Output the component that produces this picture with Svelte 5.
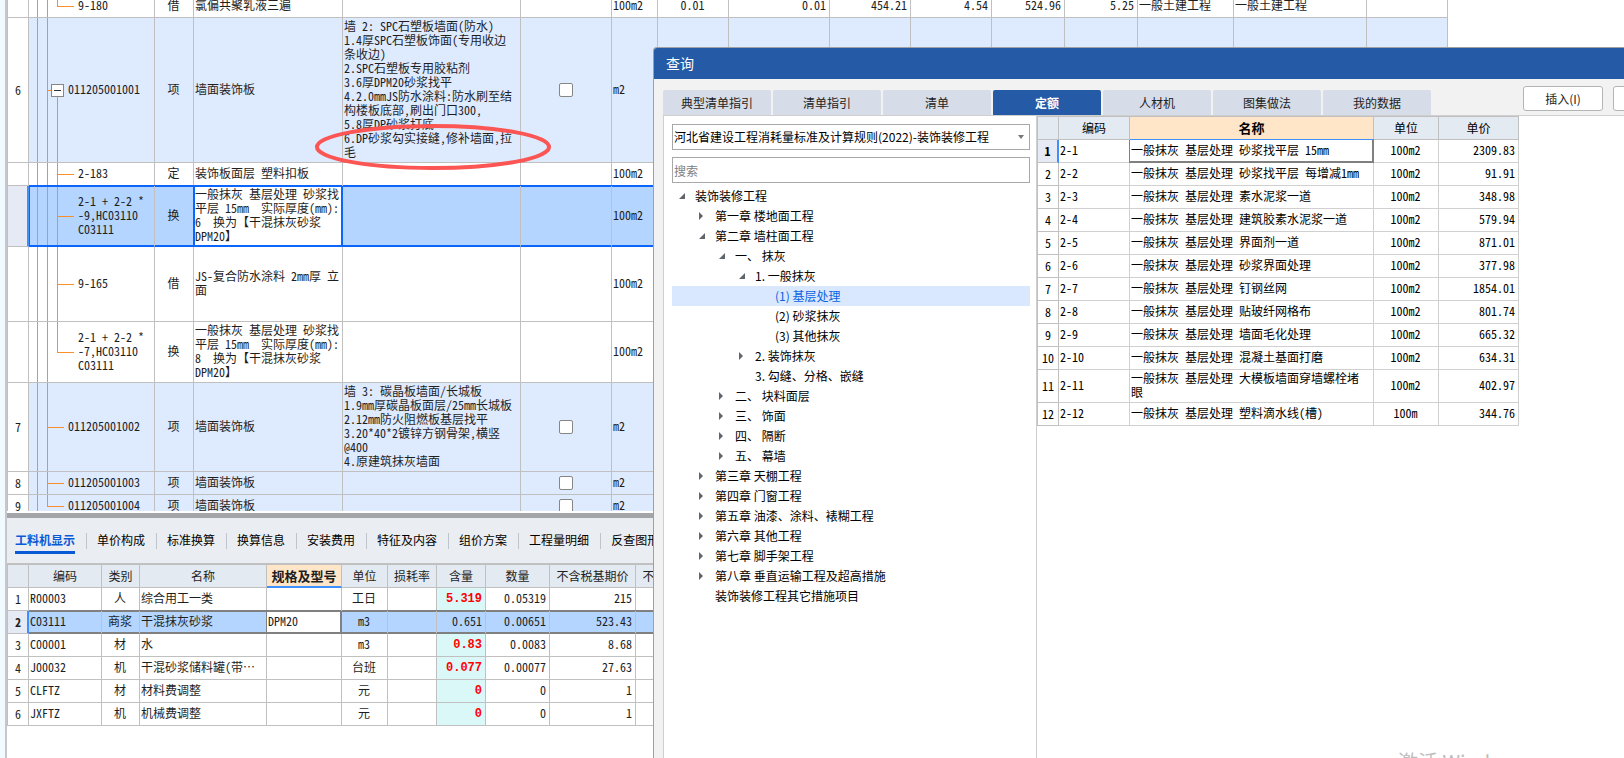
<script lang="ts">
  type BillRow = {
    no?: string
    code: string
    kind: string
    name: string
    feature?: string
    check?: boolean
    unit: string
    height: number
    item?: boolean
    open?: boolean
    last?: boolean
    selected?: boolean
    nums?: string[]
  }

  const billCols = [21, 126, 39, 149, 178, 91, 46, 71, 101, 81, 81, 73, 73, 96, 133, 81]
  const noNums = Array(9).fill('')

  const billRows: BillRow[] = [
    {
      code: '9-180', kind: '借', name: '氯偏共聚乳液三遍', unit: '100m2', height: 23, last: true,
      nums: ['0.01', '0.01', '454.21', '4.54', '524.96', '5.25', '一般土建工程', '一般土建工程', ''],
    },
    {
      no: '6', code: '011205001001', kind: '项', name: '墙面装饰板', unit: 'm2', height: 145,
      item: true, open: true, check: true,
      feature:
        '墙 2: SPC石塑板墙面(防水)\n1.4厚SPC石塑板饰面(专用收边\n条收边)\n2.SPC石塑板专用胶粘剂\n3.6厚DPM20砂浆找平\n4.2.0mmJS防水涂料:防水刷至结\n构楼板底部,刷出门口300,\n5.8厚DP砂浆打底\n6.DP砂浆勾实接缝,修补墙面,拉\n毛',
    },
    { code: '2-183', kind: '定', name: '装饰板面层 塑料扣板', unit: '100m2', height: 23 },
    {
      code: '2-1 + 2-2 *\n-9,HC03110\nC03111', kind: '换', unit: '100m2', height: 61, selected: true,
      name: '一般抹灰 基层处理 砂浆找\n平层 15mm  实际厚度(mm):\n6  换为【干混抹灰砂浆\nDPM20】',
    },
    { code: '9-165', kind: '借', name: 'JS-复合防水涂料 2mm厚 立\n面', unit: '100m2', height: 75 },
    {
      code: '2-1 + 2-2 *\n-7,HC03110\nC03111', kind: '换', unit: '100m2', height: 61, last: true,
      name: '一般抹灰 基层处理 砂浆找\n平层 15mm  实际厚度(mm):\n8  换为【干混抹灰砂浆\nDPM20】',
    },
    {
      no: '7', code: '011205001002', kind: '项', name: '墙面装饰板', unit: 'm2', height: 89,
      item: true, check: true,
      feature:
        '墙 3: 碳晶板墙面/长城板\n1.9mm厚碳晶板面层/25mm长城板\n2.12mm防火阻燃板基层找平\n3.20*40*2镀锌方钢骨架,横竖\n@400\n4.原建筑抹灰墙面',
    },
    { no: '8', code: '011205001003', kind: '项', name: '墙面装饰板', unit: 'm2', height: 23, item: true, check: true },
    { no: '9', code: '011205001004', kind: '项', name: '墙面装饰板', unit: 'm2', height: 23, item: true, check: true, last: true },
  ]

  const dockTabs = ['工料机显示', '单价构成', '标准换算', '换算信息', '安装费用', '特征及内容', '组价方案', '工程量明细', '反查图形']
  let dockTab = $state('工料机显示')

  const resourceCols = [21, 73, 38, 127, 75, 46, 49, 49, 64, 86, 86]
  const resourceHeads = ['', '编码', '类别', '名称', '规格及型号', '单位', '损耗率', '含量', '数量', '不含税基期价', '不含税市场价']
  const resources = [
    ['R00003', '人', '综合用工一类', '', '工日', '', '5.319', '0.05319', '215'],
    ['C03111', '商浆', '干混抹灰砂浆', 'DPM20', 'm3', '', '0.651', '0.00651', '523.43'],
    ['C00001', '材', '水', '', 'm3', '', '0.83', '0.0083', '8.68'],
    ['J00032', '机', '干混砂浆储料罐(带…', '', '台班', '', '0.077', '0.00077', '27.63'],
    ['CLFTZ', '材', '材料费调整', '', '元', '', '0', '0', '1'],
    ['JXFTZ', '机', '机械费调整', '', '元', '', '0', '0', '1'],
  ]

  const queryTabs = ['典型清单指引', '清单指引', '清单', '定额', '人材机', '图集做法', '我的数据']
  let queryTab = $state('定额')

  // depth, state ('open' | 'closed' | '' for a leaf), label
  const tree: [number, string, string][] = [
    [0, 'open', '装饰装修工程'],
    [1, 'closed', '第一章 楼地面工程'],
    [1, 'open', '第二章 墙柱面工程'],
    [2, 'open', '一、 抹灰'],
    [3, 'open', '1. 一般抹灰'],
    [4, '', '(1) 基层处理'],
    [4, '', '(2) 砂浆抹灰'],
    [4, '', '(3) 其他抹灰'],
    [3, 'closed', '2. 装饰抹灰'],
    [3, '', '3. 勾缝、分格、嵌缝'],
    [2, 'closed', '二、 块料面层'],
    [2, 'closed', '三、 饰面'],
    [2, 'closed', '四、 隔断'],
    [2, 'closed', '五、 幕墙'],
    [1, 'closed', '第三章 天棚工程'],
    [1, 'closed', '第四章 门窗工程'],
    [1, 'closed', '第五章 油漆、涂料、裱糊工程'],
    [1, 'closed', '第六章 其他工程'],
    [1, 'closed', '第七章 脚手架工程'],
    [1, 'closed', '第八章 垂直运输工程及超高措施'],
    [1, '', '装饰装修工程其它措施项目'],
  ]
  let treeSelected = $state(5)

  const quotaCols = [21, 71, 244, 65, 80]
  const quotas = [
    ['砂浆找平层 15mm', '100m2', '2309.83'],
    ['砂浆找平层 每增减1mm', '100m2', '91.91'],
    ['素水泥浆一道', '100m2', '348.98'],
    ['建筑胶素水泥浆一道', '100m2', '579.94'],
    ['界面剂一道', '100m2', '871.01'],
    ['砂浆界面处理', '100m2', '377.98'],
    ['钉钢丝网', '100m2', '1854.01'],
    ['贴玻纤网格布', '100m2', '801.74'],
    ['墙面毛化处理', '100m2', '665.32'],
    ['混凝土基面打磨', '100m2', '634.31'],
    ['大模板墙面穿墙螺栓堵\n眼', '100m2', '402.97'],
    ['塑料滴水线(槽)', '100m', '344.76'],
  ]
</script>

<div class="app">
  <main class="workspace">
    <section class="bill">
      <table style:width={`${billCols.reduce((a, b) => a + b)}px`}>
        <colgroup>
          {#each billCols as w}<col style:width={`${w}px`} />{/each}
        </colgroup>
        <tbody>
          {#each billRows as row}
            <tr class:item={row.item} class:selected={row.selected} style:height={`${row.height}px`}>
              <td class="no">{row.no ?? ''}</td>
              <td class="tree-cell" class:leaf={!row.item} class:open={row.open} class:last={row.last}>
                <div class="code">
                  {#if row.open}
                    <button class="toggle" aria-label="折叠">
                      <svg width="11" height="11" viewBox="0 0 11 11"><path d="M2 5.5h7" stroke="#333" /></svg>
                    </button>
                  {/if}
                  <span>{row.code}</span>
                </div>
              </td>
              <td class="center">{row.kind}</td>
              <td class="name">{row.name}</td>
              <td>{row.feature ?? ''}</td>
              <td class="center">
                {#if row.check}<input type="checkbox" aria-label="选择 {row.code}" />{/if}
              </td>
              <td>{row.unit}</td>
              {#each row.nums ?? noNums as num, i}
                <td class:center={i === 0} class:right={i > 0 && i < 6}>{num}</td>
              {/each}
            </tr>
          {/each}
        </tbody>
      </table>
      <svg class="mark" width="238" height="48" viewBox="0 0 238 48">
        <ellipse cx="119" cy="24" rx="116" ry="21" fill="none" stroke="#fb5653" stroke-width="4" />
      </svg>
    </section>

    <section class="dock">
      <nav class="dock-tabs">
        {#each dockTabs as tab}
          <button class:active={tab === dockTab} onclick={() => (dockTab = tab)}><span>{tab}</span></button>
        {/each}
      </nav>
      <table class="resources" style:width={`${resourceCols.reduce((a, b) => a + b)}px`}>
        <colgroup>
          {#each resourceCols as w}<col style:width={`${w}px`} />{/each}
        </colgroup>
        <thead>
          <tr>
            {#each resourceHeads as head, i}<th class:current={i === 4}>{head}</th>{/each}
          </tr>
        </thead>
        <tbody>
          {#each resources as cells, r}
            <tr class:selected={r === 1}>
              <td class="no">{r + 1}</td>
              {#each cells as cell, i}
                <td
                  class:center={i === 1 || i === 4}
                  class:right={i > 5}
                  class:amount={i === 6 && r !== 1}
                  class:edit={i === 3}>{cell}</td>
              {/each}
              <td></td>
            </tr>
          {/each}
        </tbody>
      </table>
    </section>
  </main>

  <div class="dialog" role="dialog" aria-labelledby="dialog-title">
    <header id="dialog-title">查询</header>
    <div class="toolbar">
      <div class="query-tabs">
        {#each queryTabs as tab}
          <button class:active={tab === queryTab} onclick={() => (queryTab = tab)}>{tab}</button>
        {/each}
      </div>
      <div class="actions">
        <button>插入(I)</button>
        <button aria-label="替换"></button>
      </div>
    </div>

    <div class="content">
      <aside>
        <div class="picker">
          <select aria-label="定额库">
            <option>河北省建设工程消耗量标准及计算规则(2022)-装饰装修工程</option>
          </select>
          <svg width="6" height="4" viewBox="0 0 6 4"><path d="M0 0h6L3 4z" fill="#777" /></svg>
        </div>
        <input class="search" type="text" placeholder="搜索" aria-label="搜索" />
        <ul>
          {#each tree as [depth, state, label], i}
            <li>
              <button
                class:active={i === treeSelected}
                style:padding-left={`${6 + depth * 20}px`}
                onclick={() => (treeSelected = i)}
              >
                <svg width="8" height="8" viewBox="0 0 8 8">
                  {#if state === 'open'}
                    <path d="M7 1v6H1z" fill="#60646b" />
                  {:else if state === 'closed'}
                    <path d="M1 0v8l4-4z" fill="#60646b" />
                  {/if}
                </svg>
                <span>{label}</span>
              </button>
            </li>
          {/each}
        </ul>
      </aside>

      <div class="results">
        <table class="quotas" style:width={`${quotaCols.reduce((a, b) => a + b)}px`}>
          <colgroup>
            {#each quotaCols as w}<col style:width={`${w}px`} />{/each}
          </colgroup>
          <thead>
            <tr>
              <th></th>
              <th>编码</th>
              <th class="current">名称</th>
              <th>单位</th>
              <th>单价</th>
            </tr>
          </thead>
          <tbody>
            {#each quotas as [name, unit, price], i}
              <tr class:picked={i === 0}>
                <td class="no">{i + 1}</td>
                <td>2-{i + 1}</td>
                <td class="name">一般抹灰 基层处理 {name}</td>
                <td class="center">{unit}</td>
                <td class="right">{price}</td>
              </tr>
            {/each}
          </tbody>
        </table>
        <p class="watermark">激活 Windows</p>
      </div>
    </div>
  </div>
</div>

<style>
  :global(body) {
    overflow: hidden;
  }

  .app {
    --ui: 'Noto Sans CJK SC', sans-serif;
    --grid: 'Noto Sans Mono CJK SC', 'Noto Sans CJK SC', monospace;
    --line: #c0c0c0;
    --orange: #f98f2a;
    position: relative;
    height: 100vh;
    overflow: hidden;
    background: #fff;
    font: 12px/14px var(--ui);
    color: #1e1e1e;
  }
  button,
  select,
  input {
    box-sizing: border-box;
    margin: 0;
    padding: 0;
    font: inherit;
    color: inherit;
  }

  .workspace {
    box-sizing: border-box;
    display: flex;
    flex-direction: column;
    height: 100%;
    border-left: 5px solid #f1fbff;
    box-shadow: inset 2px 0 #c5c7cc;
    padding-left: 2px;
  }

  table {
    table-layout: fixed;
    border-collapse: separate;
    border-spacing: 0;
    border-left: 1px solid var(--line);
    font: 12px/14px var(--grid);
  }
  td,
  th {
    box-sizing: border-box;
    padding: 0 1px 2px;
    border-right: 1px solid var(--line);
    border-bottom: 1px solid var(--line);
    white-space: pre;
    overflow: hidden;
    text-align: left;
  }
  th {
    height: 23px;
    background: #e3eaf2;
    font-weight: 400;
    text-align: center;
    padding: 0;
  }
  th.current {
    background: #ffe6c9;
    font-size: 13px;
    font-weight: 700;
  }
  .center {
    text-align: center;
    padding: 0 1px 2px 0;
  }
  .no {
    text-align: center;
    padding: 0;
  }
  .right {
    text-align: right;
    padding-right: 3px;
  }

  .bill {
    position: relative;
    flex: 1;
    min-height: 0;
    overflow: hidden;
    border-bottom: 2px solid #fff;
  }
  .bill table {
    margin-top: -5px;
  }
  .item td:not(.no) {
    background-color: #deeafe;
  }
  .bill input {
    appearance: none;
    display: block;
    width: 14px;
    height: 14px;
    margin: 2px auto 0;
    border: 1px solid #868686;
    border-radius: 2px;
    background: #fff;
  }
  /* guide lines: two ancestors, own branch, own stub */
  .tree-cell {
    padding: 0;
    background-image: linear-gradient(var(--orange) 0 0), linear-gradient(var(--orange) 0 0),
      linear-gradient(var(--orange) 0 0);
    background-repeat: no-repeat;
    background-position: 8px 0, 18px 0, 18px 50%;
    background-size: 1px 100%, 1px 100%, 17px 1px;
  }
  .tree-cell.last {
    background-size: 1px 100%, 1px 50%, 17px 1px;
  }
  .tree-cell.open {
    background-image: linear-gradient(var(--orange) 0 0), linear-gradient(var(--orange) 0 0),
      linear-gradient(var(--orange) 0 0), linear-gradient(var(--orange) 0 0);
    background-position: 8px 0, 18px 0, 18px 50%, 28px 100%;
    background-size: 1px 100%, 1px 100%, 5px 1px, 1px 50%;
  }
  .tree-cell.leaf {
    background-image: linear-gradient(var(--orange) 0 0), linear-gradient(var(--orange) 0 0),
      linear-gradient(var(--orange) 0 0), linear-gradient(var(--orange) 0 0);
    background-position: 8px 0, 18px 0, 28px 50%, 28px 0;
    background-size: 1px 100%, 1px 100%, 17px 1px, 1px 100%;
  }
  .tree-cell.leaf.last {
    background-size: 1px 100%, 1px 100%, 17px 1px, 1px 50%;
  }
  .code {
    display: flex;
    align-items: center;
    gap: 4px;
    padding-left: 39px;
  }
  .code span {
    padding-bottom: 2px;
  }
  .open .code {
    padding-left: 22px;
  }
  .leaf .code {
    padding-left: 49px;
  }
  .toggle {
    display: flex;
    width: 13px;
    height: 13px;
    border: 1px solid #868686;
    background: #fff;
  }

  .selected td {
    background-color: #b3d5ff;
  }
  .bill .selected td {
    border-bottom-color: #0a66ff;
    box-shadow: 0 -1px #0a66ff, inset 0 1px #0a66ff, inset 0 -1px #0a66ff;
  }
  .bill .selected .tree-cell {
    box-shadow: 0 -1px #0a66ff, inset 1px 1px #0a66ff, inset 0 -1px #0a66ff;
  }
  .bill .selected .name {
    background: #fff;
    border-right-color: #0a66ff;
    box-shadow: -1px -1px #0a66ff, -1px 0 #0a66ff, inset 1px 1px #0a66ff, inset -1px -1px #0a66ff;
  }
  .bill .selected .no,
  .dock .selected .no {
    background: #e6eaf5;
    border-right-color: #3f8fff;
    border-bottom-color: var(--line);
    box-shadow: inset -1px 0 #3f8fff;
    font-weight: 700;
  }
  .mark {
    position: absolute;
    left: 307px;
    top: 123px;
    pointer-events: none;
  }

  .dock {
    flex: none;
    height: 240px;
    overflow: hidden;
    border-top: 5px solid #a3a5a9;
  }
  .dock-tabs {
    display: flex;
    align-items: center;
    height: 45px;
    padding-left: 8px;
    background: #eaedf1;
    border-bottom: 2px solid var(--line);
    overflow: hidden;
  }
  .dock-tabs button {
    flex: none;
    height: 16px;
    margin-right: 10px;
    padding-right: 11px;
    border: 0;
    border-right: 1px solid #c0c4cc;
    background: none;
    color: #000;
    line-height: 14px;
  }
  .dock-tabs button span {
    display: block;
    height: 16px;
  }
  .dock-tabs .active {
    color: #0a5ad8;
    font-weight: 700;
  }
  .dock-tabs .active span {
    box-shadow: 0 2px #eaedf1, 0 5px #0a5ad8;
  }
  .resources tr {
    height: 23px;
  }
  .resources .current {
    border-bottom: 2px solid #3f8fff;
  }
  .resources .amount {
    padding-bottom: 0;
    background: #dbf8f9;
    color: #f00;
    font: 700 12px/14px 'Liberation Mono', monospace;
  }
  .dock .selected td {
    border-bottom-color: #808080;
    box-shadow: 0 -1px #808080, inset 0 1px #808080, inset 0 -1px #808080;
  }
  .dock .selected .edit {
    background: #fff;
    border-right-color: #808080;
    box-shadow: -1px -1px #808080, -1px 0 #808080, inset 0 1px #808080, inset -1px -1px #808080;
  }

  .dialog {
    position: absolute;
    left: 653px;
    top: 47px;
    right: -70px;
    bottom: 0;
    display: flex;
    flex-direction: column;
    border: 1px solid #a0a0a0;
    border-bottom: 0;
    border-radius: 4px 4px 0 0;
    background: #f2f2f2;
    overflow: hidden;
  }
  header {
    padding: 0 12px;
    background: #245aa6;
    color: #fff;
    font-size: 14px;
    line-height: 31px;
  }
  .toolbar {
    display: flex;
    justify-content: space-between;
    padding: 7px 0 0 9px;
  }
  .query-tabs {
    display: flex;
    gap: 2px;
    padding-top: 4px;
  }
  .query-tabs button {
    width: 108px;
    height: 25px;
    border: 0;
    border-radius: 2px 2px 0 0;
    background: #d6dce8;
    color: #222;
  }
  .query-tabs .active {
    background: #245aa6;
    color: #fff;
    font-weight: 700;
  }
  .actions {
    display: flex;
    gap: 10px;
  }
  .actions button {
    width: 80px;
    height: 25px;
    border: 1px solid #b4b4b4;
    border-radius: 3px;
    background: #fff;
  }

  .content {
    flex: 1;
    display: flex;
    min-height: 0;
    margin-left: 9px;
    border: 1px solid #cfcfcf;
    border-width: 1px 0 0 1px;
    background: #fff;
    color: #000;
  }
  aside {
    box-sizing: border-box;
    flex: none;
    width: 373px;
    padding: 8px 6px 0 8px;
    border-right: 1px solid #cfcfcf;
  }
  .picker {
    position: relative;
    margin-bottom: 7px;
  }
  .picker svg {
    position: absolute;
    right: 6px;
    top: 11px;
    pointer-events: none;
  }
  select,
  .search {
    appearance: none;
    display: block;
    width: 100%;
    height: 26px;
    padding: 0 1px;
    border: 1px solid #a8a8a8;
    border-radius: 0;
    background: #fff;
  }
  .search::placeholder {
    color: #808080;
    opacity: 1;
  }
  ul {
    margin: 3px 0 0;
    padding: 0;
    list-style: none;
  }
  li button {
    display: flex;
    align-items: center;
    gap: 9px;
    width: 100%;
    height: 20px;
    border: 0;
    background: none;
    white-space: pre;
  }
  li .active {
    background: #d9e8ff;
    color: #0a62e0;
  }

  .results {
    flex: 1;
    display: flex;
    flex-direction: column;
    justify-content: space-between;
    overflow: hidden;
  }
  .quotas tr {
    height: 23px;
  }
  .quotas tr:nth-child(11) {
    height: 33px;
  }
  .quotas th {
    border-top: 1px solid var(--line);
    height: 24px;
  }
  .quotas td:not(.no) {
    border-color: #d0d0d0;
  }
  .quotas .picked .no {
    background: #e6eaf5;
    border-right: 2px solid #3f8fff;
    font-weight: 700;
  }
  .quotas .picked .name {
    border-color: #808080;
    box-shadow: 0 -1px #3f8fff, -1px 0 #808080, inset -1px -1px #808080;
  }
  .watermark {
    margin: 0 0 -16px 361px;
    color: #bdbdbd;
    font-size: 20px;
    line-height: 24px;
  }
</style>
